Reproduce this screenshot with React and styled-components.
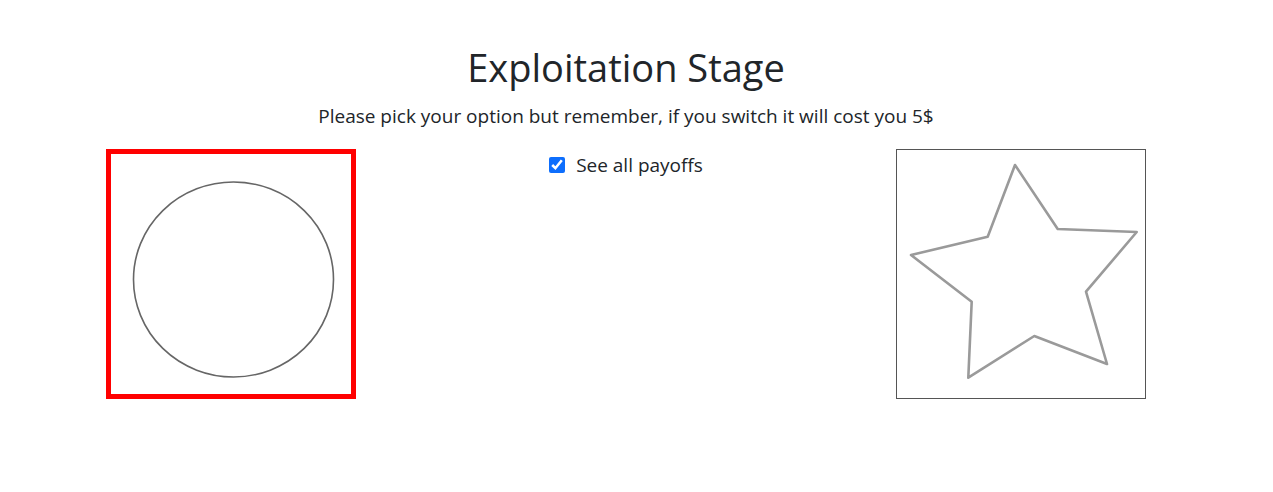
import styled, { createGlobalStyle } from "styled-components";

const GlobalStyle = createGlobalStyle`
  body {
    margin: 0;
    background: #fff;
    font-family: "Open Sans", "Noto Sans", sans-serif;
    color: #212529;
  }
`;

const Page = styled.main`
  padding: 44px 21px 0 0;
`;

const Title = styled.h1`
  margin: 0;
  text-align: center;
  font-size: 38px;
  font-weight: 400;
  line-height: 46px;
`;

const Subtitle = styled.p`
  margin: 0;
  margin-top: 12px;
  text-align: center;
  font-size: 19px;
  line-height: 28px;
`;

const Row = styled.div`
  display: flex;
  align-items: flex-start;
  justify-content: center;
  margin-top: 19px;
`;

const Option = styled.div`
  flex: 0 0 250px;
  height: 250px;
  box-sizing: border-box;
  border: ${(p) => (p.$selected ? "5px solid #ff0000" : "1px solid #555")};
  display: flex;
  align-items: center;
  justify-content: center;
  cursor: pointer;
`;

const Middle = styled.div`
  flex: 0 0 540px;
  display: flex;
  justify-content: center;
  padding-top: 2px;
`;

const CheckLabel = styled.label`
  display: flex;
  align-items: center;
  gap: 11px;
  font-size: 19px;
  line-height: 28px;
`;

const Check = styled.input`
  width: 16px;
  height: 16px;
  margin: 0;
  accent-color: #0d6efd;
`;

const Circle = () => (
  <svg width="240" height="240" viewBox="0 0 240 240">
    <ellipse cx="122.5" cy="125.5" rx="100" ry="97.5" fill="none" stroke="#666" strokeWidth="1.6" />
  </svg>
);

const Star = () => (
  <svg width="248" height="248" viewBox="0 0 248 248">
    <polygon
      points="119,16 161.7,80 240.7,83 190,142.7 211,215 138.3,187 72.3,228.7 75.7,152.7 15,106 91.7,87.7"
      fill="none"
      stroke="#9a9a9a"
      strokeWidth="2.6"
      strokeLinejoin="round"
      transform="translate(-1,-1)"
    />
  </svg>
);

export default function App() {
  return (
    <Page>
      <GlobalStyle />
      <Title>Exploitation Stage</Title>
      <Subtitle>
        Please pick your option but remember, if you switch it will cost you 5$
      </Subtitle>
      <Row>
        <Option $selected>
          <Circle />
        </Option>
        <Middle>
          <CheckLabel>
            <Check type="checkbox" defaultChecked />
            See all payoffs
          </CheckLabel>
        </Middle>
        <Option>
          <Star />
        </Option>
      </Row>
    </Page>
  );
}
